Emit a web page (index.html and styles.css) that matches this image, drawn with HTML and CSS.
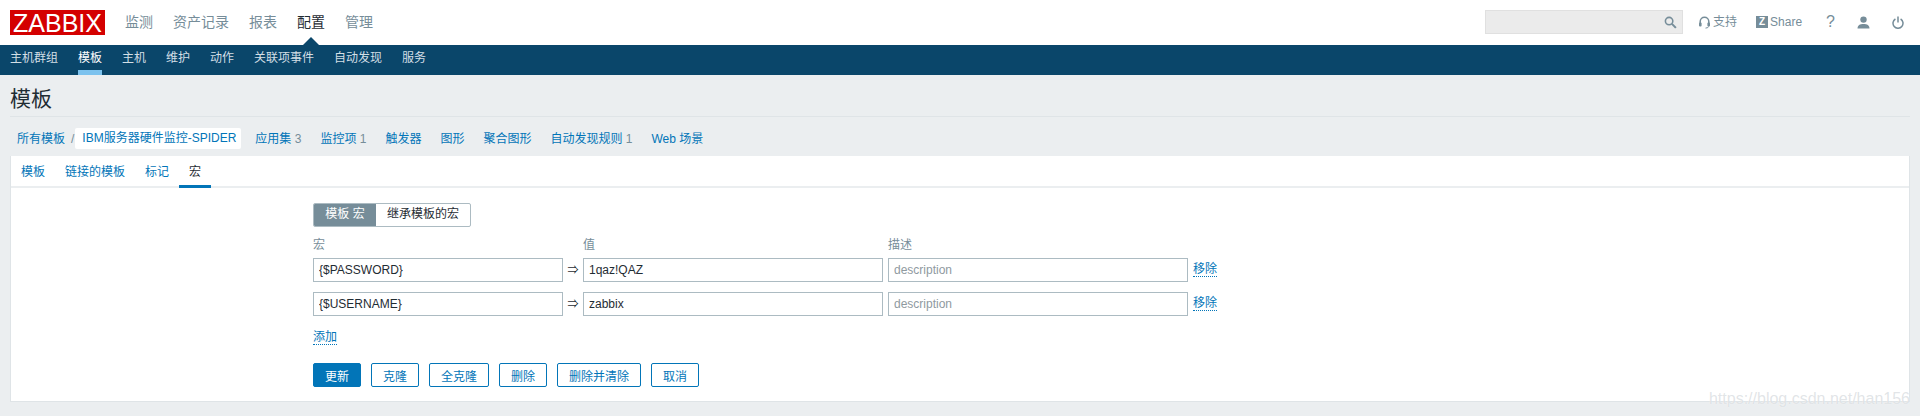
FILE: index.html
```html
<!DOCTYPE html>
<html lang="zh">
<head>
<meta charset="utf-8">
<title>模板</title>
<link rel="stylesheet" href="styles.css">
</head>
<body>
<header class="top">
  <a class="logo">ZABBIX</a>
  <nav class="menu">
    <a>监测</a><a>资产记录</a><a>报表</a><a class="on">配置</a><a>管理</a>
  </nav>
  <div class="tools">
    <div class="search">
      <svg width="13" height="13" viewBox="0 0 14 14"><circle cx="5.500" cy="5.500" r="4" fill="none" stroke="#768d99" stroke-width="1.700"/><path d="M8.500 8.500l4.300 4.300" stroke="#768d99" stroke-width="2.200"/></svg>
    </div>
    <a class="tool support">
      <svg width="11" height="13" viewBox="0 0 11 13"><path d="M1.200 8V5.500a4.300 4.300 0 0 1 8.600 0V8" fill="none" stroke="#768d99" stroke-width="1.500"/><rect x="0" y="6.500" width="2.600" height="4" rx="1" fill="#768d99"/><rect x="8.400" y="6.500" width="2.600" height="4" rx="1" fill="#768d99"/><path d="M9.500 10.500q0 1.500-3 1.600" fill="none" stroke="#768d99" stroke-width="1"/></svg>
      <span>支持</span>
    </a>
    <a class="tool share">
      <span class="zbox">Z</span><span>Share</span>
    </a>
    <a class="tool help">?</a>
    <a class="tool user">
      <svg width="13" height="13" viewBox="0 0 13 13"><circle cx="6.500" cy="3.600" r="3.200" fill="#768d99"/><path d="M0.500 12.500c0-3.200 2.400-4.500 6-4.500s6 1.300 6 4.500z" fill="#768d99"/></svg>
    </a>
    <a class="tool power">
      <svg width="12" height="13" viewBox="0 0 12 13"><path d="M3.400 3A5 5 0 1 0 8.600 3" fill="none" stroke="#768d99" stroke-width="1.500"/><path d="M6 0.500V6.500" stroke="#768d99" stroke-width="1.500"/></svg>
    </a>
  </div>
</header>
<nav class="subnav">
  <a>主机群组</a><a class="on">模板</a><a>主机</a><a>维护</a><a>动作</a><a>关联项事件</a><a>自动发现</a><a>服务</a>
</nav>
<main class="page">
  <h1 class="title">模板</h1>
  <div class="crumbs">
    <a class="all">所有模板</a><span class="slash">/</span><a class="current">IBM服务器硬件监控-SPIDER</a>
    <a class="item">应用集 <em>3</em></a><a class="item">监控项 <em>1</em></a><a class="item">触发器</a><a class="item">图形</a><a class="item">聚合图形</a><a class="item">自动发现规则 <em>1</em></a><a class="item">Web 场景</a>
  </div>
  <section class="card">
    <div class="tabs">
      <a>模板</a><a>链接的模板</a><a>标记</a><a class="on">宏</a>
    </div>
    <div class="form">
      <div class="toggle"><span class="sel">模板 宏</span><span class="opt">继承模板的宏</span></div>
      <div class="grid">
        <div class="head">宏</div><div></div><div class="head">值</div><div class="head">描述</div><div></div>
        <input class="field name" value="{$PASSWORD}"><span class="arrow">⇒</span><input class="field wide" value="1qaz!QAZ"><input class="field wide" placeholder="description"><a class="dash">移除</a>
        <input class="field name" value="{$USERNAME}"><span class="arrow">⇒</span><input class="field wide" value="zabbix"><input class="field wide" placeholder="description"><a class="dash">移除</a>
      </div>
      <a class="dash add">添加</a>
      <div class="buttons">
        <button class="btn primary">更新</button><button class="btn">克隆</button><button class="btn">全克隆</button><button class="btn">删除</button><button class="btn">删除并清除</button><button class="btn">取消</button>
      </div>
    </div>
  </section>
</main>
<div class="mark">https://blog.csdn.net/han156</div>
</body>
</html>
```
FILE: styles.css
```css
* { box-sizing: border-box; }
html, body { margin: 0; height: 416px; overflow: hidden; }
body {
  position: relative;
  background: #ebeef0;
  color: #1f2c33;
  font: 12px/14px "Liberation Sans", "Noto Sans CJK SC", sans-serif;
}
a { text-decoration: none; }

.top { height: 45px; background: #fff; display: flex; align-items: flex-start; padding: 10px 0 0 10px; }
.logo {
  width: 95px; height: 25px; background: #d40000; color: #fff;
  font-size: 25px; line-height: 26px; text-align: center;
}
.menu { display: flex; gap: 20px; margin-left: 20px; height: 35px; font-size: 14px; line-height: 24px; color: #768d99; }
.menu a { position: relative; }
.menu a.on { color: #1f2c33; }
.menu a.on::after {
  content: ""; position: absolute; left: 6px; top: 27px;
  border: 8px solid transparent; border-top: 0; border-bottom-color: #0a466a;
}

.tools { margin-left: auto; display: flex; align-items: center; height: 24px; color: #768d99; }
.search {
  width: 198px; height: 24px; background: #ebebeb; border: 1px solid #e0e0e0;
  display: flex; align-items: center; justify-content: flex-end; padding-right: 5px;
}
.tool { display: flex; align-items: center; gap: 3px; }
.support { margin-left: 16px; }
.share { margin-left: 19px; }
.zbox { width: 12px; height: 12px; background: #768d99; color: #fff; font-size: 10px; line-height: 12px; font-weight: 700; text-align: center; }
.share span:last-child { margin-left: -1px; }
.help { margin-left: 24px; font-size: 16px; }
.user { margin-left: 22px; }
.power { margin-left: 22px; margin-right: 16px; }

.subnav { height: 30px; background: #0a466a; display: flex; gap: 20px; padding-left: 10px; color: #d3dfe6; line-height: 26px; }
.subnav a { height: 30px; }
.subnav a.on { color: #fff; border-bottom: 5px solid #7cc2ee; }

.page { padding: 0 10px; }
.title {
  margin: 0; height: 42px; border-bottom: 1px solid #dfe4e7; padding-top: 2px;
  font-size: 21px; font-weight: 400; line-height: 44px;
}
.crumbs { display: flex; align-items: center; height: 21px; margin-top: 11px; color: #0275b8; }
.all { margin-left: 7px; }
.slash { margin: 0 1px 0 6px; color: #768d99; }
.current { background: #fff; height: 21px; line-height: 21px; padding: 0 7px; width: 166px; margin-right: 7px; border-radius: 2px; white-space: nowrap; }
.item { margin-left: 7px; margin-right: 12px; white-space: nowrap; }
.item em { font-style: normal; color: #768d99; }

.card { margin-top: 7px; height: 246px; background: #fff; border: 1px solid #dfe4e7; border-top: 0; }
.tabs { display: flex; height: 32px; border-bottom: 2px solid #ebeef0; color: #0275b8; }
.tabs a { padding: 0 10px; height: 32px; line-height: 32px; }
.tabs a.on { color: #1f2c33; border-bottom: 3px solid #0275b8; }

.form { padding: 15px 0 0 302px; }
.toggle {
  display: flex; width: 158px; height: 24px; border: 1px solid #acbbc2; border-radius: 2px; overflow: hidden;
}
.sel { width: 62px; background: #768d99; color: #fff; text-align: center; line-height: 21px; }
.opt { flex: 1; text-align: center; line-height: 21px; }
.grid {
  display: grid;
  grid-template-columns: 250px 20px 305px 300px auto;
  align-items: center;
  justify-content: start;
  margin-top: 11px;
}
.head { height: 20px; color: #768d99; }
.field {
  height: 24px; border: 1px solid #acbbc2; padding: 0 5px; margin-bottom: 10px;
  background: #fff; color: #1f2c33; font: 12px "Liberation Sans", sans-serif; outline: 0; border-radius: 0;
}
.name { width: 250px; }
.wide { width: 300px; }
.field::placeholder { color: #8f9a9f; opacity: 1; }
.arrow { text-align: center; margin-bottom: 10px; font-size: 11px; }
.dash { color: #0275b8; border-bottom: 1px dotted #0275b8; justify-self: start; height: 16px; line-height: 17px; }
.grid .dash { margin: 0 0 12px 5px; }
.add { display: block; width: fit-content; margin-top: 3px; }
.buttons { display: flex; gap: 10px; margin-top: 18px; }
.btn {
  height: 24px; min-width: 48px; padding: 0 11px; background: #fff; color: #0275b8;
  border: 1px solid #0275b8; border-radius: 2px; font: 12px "Liberation Sans", "Noto Sans CJK SC", sans-serif;
}
.btn.primary { background: #0275b8; color: #fff; }

.mark { position: absolute; right: 10px; top: 390px; font-size: 16px; line-height: 18px; color: rgba(180,188,194,.4); text-shadow: 0 0 1px #fff; }
```
